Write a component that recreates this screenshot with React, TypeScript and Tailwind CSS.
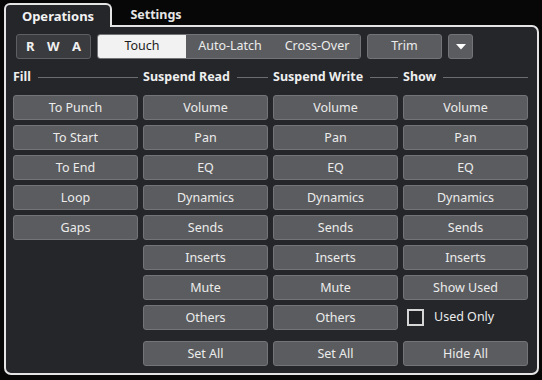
import React from "react";

const font = { fontFamily: '"Noto Sans", "Open Sans", sans-serif' };

const Btn = ({ label }: { label: string }) => (
  <button className="flex h-[25px] w-full items-center justify-center rounded-[3px] border border-[#737477] bg-[#5b5c5f] pt-[2px] text-[12.5px] leading-none text-[#ececec]">
    {label}
  </button>
);

const Header = ({ title }: { title: string }) => (
  <div className="flex items-center">
    <span className="text-[12.5px] font-bold text-[#eeeeee]">{title}</span>
    <div className="ml-[7px] h-px flex-1 bg-[#6c6d70]" />
  </div>
);

const fill = ["To Punch", "To Start", "To End", "Loop", "Gaps"];
const params = ["Volume", "Pan", "EQ", "Dynamics", "Sends", "Inserts", "Mute", "Others"];
const show = ["Volume", "Pan", "EQ", "Dynamics", "Sends", "Inserts", "Show Used"];

const App = () => {
  return (
    <div className="h-[380px] w-[542px] overflow-hidden bg-[#070707] select-none" style={font}>
      {/* Tabs */}
      <div className="flex pt-[3px]">
        <div className="relative z-10 -mb-[2px] ml-[4px] flex h-[24px] w-[108px] items-center justify-center rounded-t-[6px] border-2 border-b-0 border-[#e4e4e4] bg-[#24262a] pt-[1px] text-[13px] font-bold text-[#f2f2f2]">
          Operations
        </div>
        <div className="flex h-[22px] w-[88px] items-center justify-center pt-[2px] text-[12.5px] font-bold text-[#e6e6e6]">
          Settings
        </div>
      </div>

      {/* Panel */}
      <div className="ml-[4px] h-[350px] w-[535px] rounded-tr-[7px] rounded-b-[7px] border-2 border-[#e4e4e4] bg-[#24262a] px-[7px] pt-[7px]">
        {/* Toolbar */}
        <div className="flex h-[25px] gap-[6px] pl-[3px]">
          <div className="flex w-[75px] items-center justify-between rounded-[3px] border border-[#5e5f63] bg-[#3a3b3f] px-[9px] text-[13px] font-bold text-[#f0f0f0]">
            <span>R</span>
            <span>W</span>
            <span>A</span>
          </div>
          <div className="flex w-[264px] overflow-hidden rounded-[3px] border border-[#737477] text-[12.5px] text-[#ececec]">
            <div className="flex w-[88px] items-center justify-center bg-[#f2f2f2] text-[#1c1c1c]">Touch</div>
            <div className="flex w-[88px] items-center justify-center bg-[#5b5c5f]">Auto-Latch</div>
            <div className="flex flex-1 items-center justify-center bg-[#5b5c5f]">Cross-Over</div>
          </div>
          <button className="w-[75px] rounded-[3px] border border-[#737477] bg-[#5b5c5f] text-[12.5px] text-[#ececec]">
            Trim
          </button>
          <button className="flex w-[25px] items-center justify-center rounded-[3px] border border-[#737477] bg-[#5b5c5f]">
            <svg width="10" height="6" viewBox="0 0 10 6">
              <path d="M0 0 L10 0 L5 5.5 Z" fill="#ffffff" />
            </svg>
          </button>
        </div>

        {/* Headers */}
        <div className="mt-[8px] grid h-[20px] grid-cols-[125px_125px_125px_125px] items-center gap-x-[5px]">
          <Header title="Fill" />
          <Header title="Suspend Read" />
          <Header title="Suspend Write" />
          <Header title="Show" />
        </div>

        {/* Buttons */}
        <div className="mt-[8px] grid grid-cols-[125px_125px_125px_125px] gap-x-[5px]">
          <div className="flex flex-col gap-[5px]">
            {fill.map((f) => (
              <Btn key={f} label={f} />
            ))}
          </div>
          <div className="flex flex-col gap-[5px]">
            {params.map((p) => (
              <Btn key={p} label={p} />
            ))}
            <div className="mt-[6px]">
              <Btn label="Set All" />
            </div>
          </div>
          <div className="flex flex-col gap-[5px]">
            {params.map((p) => (
              <Btn key={p} label={p} />
            ))}
            <div className="mt-[6px]">
              <Btn label="Set All" />
            </div>
          </div>
          <div className="flex flex-col gap-[5px]">
            {show.map((s) => (
              <Btn key={s} label={s} />
            ))}
            <div className="flex h-[25px] items-center pl-[4px]">
              <div className="h-[17px] w-[17px] border-2 border-[#d6d6d6] bg-[#1f2024]" />
              <span className="ml-[10px] text-[12.5px] text-[#ececec]">Used Only</span>
            </div>
            <div className="mt-[6px]">
              <Btn label="Hide All" />
            </div>
          </div>
        </div>
      </div>
    </div>
  );
};

export default App;
